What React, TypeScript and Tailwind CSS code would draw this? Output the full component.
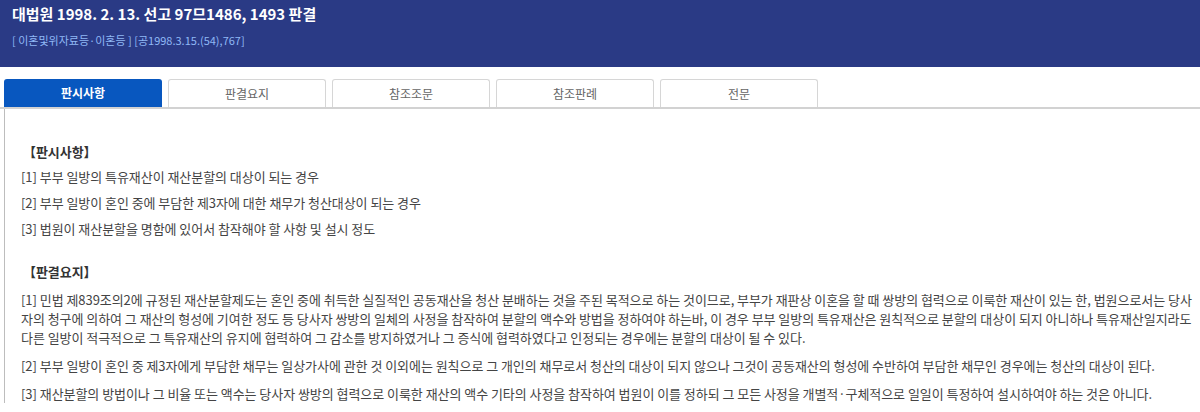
import React from "react";

const tabs = ["판시사항", "판결요지", "참조조문", "참조판례", "전문"];

const holdings = [
  "[1] 부부 일방의 특유재산이 재산분할의 대상이 되는 경우",
  "[2] 부부 일방이 혼인 중에 부담한 제3자에 대한 채무가 청산대상이 되는 경우",
  "[3] 법원이 재산분할을 명함에 있어서 참작해야 할 사항 및 설시 정도",
];

const summary = [
  "[1] 민법 제839조의2에 규정된 재산분할제도는 혼인 중에 취득한 실질적인 공동재산을 청산 분배하는 것을 주된 목적으로 하는 것이므로, 부부가 재판상 이혼을 할 때 쌍방의 협력으로 이룩한 재산이 있는 한, 법원으로서는 당사자의 청구에 의하여 그 재산의 형성에 기여한 정도 등 당사자 쌍방의 일체의 사정을 참작하여 분할의 액수와 방법을 정하여야 하는바, 이 경우 부부 일방의 특유재산은 원칙적으로 분할의 대상이 되지 아니하나 특유재산일지라도 다른 일방이 적극적으로 그 특유재산의 유지에 협력하여 그 감소를 방지하였거나 그 증식에 협력하였다고 인정되는 경우에는 분할의 대상이 될 수 있다.",
  "[2] 부부 일방이 혼인 중 제3자에게 부담한 채무는 일상가사에 관한 것 이외에는 원칙으로 그 개인의 채무로서 청산의 대상이 되지 않으나 그것이 공동재산의 형성에 수반하여 부담한 채무인 경우에는 청산의 대상이 된다.",
  "[3] 재산분할의 방법이나 그 비율 또는 액수는 당사자 쌍방의 협력으로 이룩한 재산의 액수 기타의 사정을 참작하여 법원이 이를 정하되 그 모든 사정을 개별적·구체적으로 일일이 특정하여 설시하여야 하는 것은 아니다.",
];

export default function App() {
  return (
    <div
      className="w-[1200px] h-[412px] overflow-hidden bg-white"
      style={{ fontFamily: '"Noto Sans CJK KR", "Noto Sans", sans-serif' }}
    >
      <header className="h-[67px] bg-[#2a3a85] px-[12px] pt-[3px]">
        <h1 className="text-[15px] font-bold leading-[22px] text-white">
          대법원 1998. 2. 13. 선고 97므1486, 1493 판결
        </h1>
        <p className="mt-[7px] text-[11px] leading-[16px] text-[#8fb8f5]">
          [ 이혼및위자료등·이혼등 ] [공1998.3.15.(54),767]
        </p>
      </header>

      <nav className="mt-[12px] flex gap-[6px] pl-[4px] border-b-2 border-[#d2d2d2]">
        {tabs.map((t, i) => (
          <div
            key={t}
            className={
              i === 0
                ? "h-[28px] w-[158px] flex items-center justify-center rounded-t-[3px] bg-[#0857bf] text-[12px] font-bold text-white"
                : "h-[28px] w-[158px] flex items-center justify-center rounded-t-[3px] border border-b-0 border-[#d6d6d6] text-[12px] text-[#666]"
            }
          >
            {t}
          </div>
        ))}
      </nav>

      <section className="ml-[4px] border-l border-[#bdbdbd] pl-[16px] pr-[2px] pt-[34px] text-[13px] tracking-[-0.05px] text-[#444]">
        <h2 className="pl-[2px] text-[13px] font-bold leading-[18px] text-[#333]">【판시사항】</h2>
        <div className="mt-[7px] flex flex-col gap-[8px]">
          {holdings.map((h) => (
            <p key={h} className="leading-[18px]">
              {h}
            </p>
          ))}
        </div>

        <h2 className="mt-[25px] pl-[2px] text-[13px] font-bold leading-[18px] text-[#333]">【판결요지】</h2>
        <div className="mt-[9px] flex flex-col gap-[9px]">
          {summary.map((s) => (
            <p key={s} className="leading-[19px]">
              {s}
            </p>
          ))}
        </div>
      </section>
    </div>
  );
}
